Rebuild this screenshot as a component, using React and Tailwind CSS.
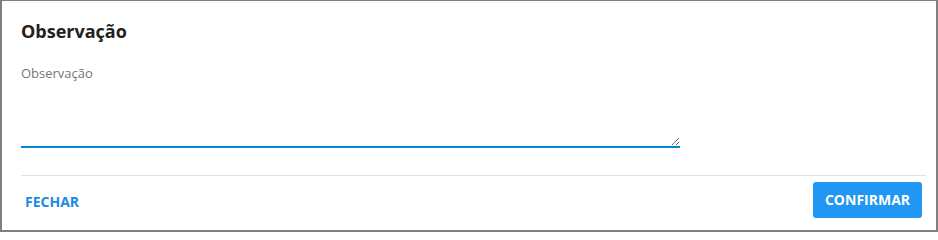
import { useState } from 'react';

export default function App() {
  const [obs, setObs] = useState('');

  return (
    <div className="w-[938px] h-[232px] bg-white border-t border-l-2 border-r-2 border-b-2 border-[#808080] flex flex-col font-['Open_Sans',sans-serif]">
      {/* Header */}
      <div className="pl-[19px] pt-[16px]">
        <h2 className="text-lg leading-7 font-bold text-[#212121]">Observação</h2>
      </div>

      {/* Body */}
      <div className="pl-[19px] pt-[20px] flex flex-col">
        <label htmlFor="obs" className="text-[13px] leading-4 text-[#757575]">
          Observação
        </label>
        <textarea
          id="obs"
          value={obs}
          onChange={(e) => setObs(e.target.value)}
          className="mt-[3px] w-[659px] h-[64px] border-0 border-b-2 border-[#0288d1] outline-none resize text-sm text-[#212121]"
        />
      </div>

      {/* Divider */}
      <div className="ml-[19px] mr-[10px] mt-[27px] border-t border-[#e0e0e0]" />

      {/* Footer */}
      <div className="pl-[23px] pr-[14px] pt-[6px] flex items-center justify-between">
        <button type="button" className="pt-[4px] text-sm leading-5 font-bold text-[#1e88e5]">
          FECHAR
        </button>
        <button
          type="button"
          className="h-[36px] w-[109px] rounded-[3px] bg-[#2196f3] text-white text-sm leading-5 font-bold"
        >
          CONFIRMAR
        </button>
      </div>
    </div>
  );
}
